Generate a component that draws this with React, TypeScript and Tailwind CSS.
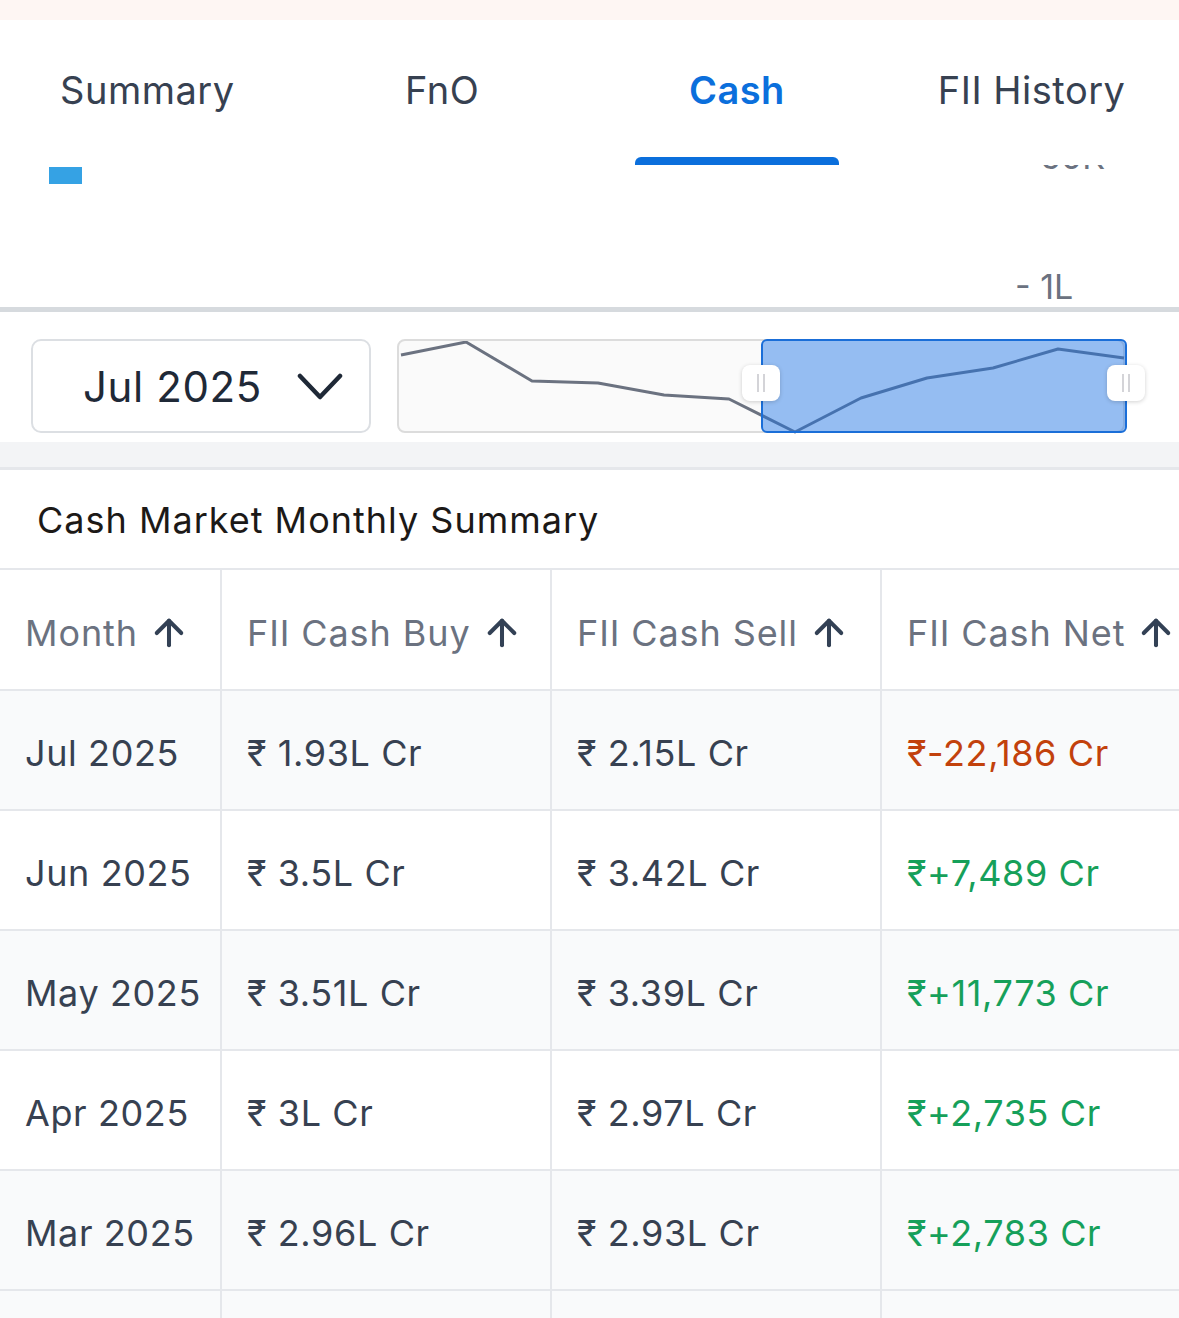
import React from 'react';
import { ArrowUp } from 'lucide-react';

type Row = { month: string; buy: string; sell: string; net: string; up: boolean };

const ROWS: Row[] = [
  { month: 'Jul 2025', buy: '₹ 1.93L Cr', sell: '₹ 2.15L Cr', net: '₹-22,186 Cr', up: false },
  { month: 'Jun 2025', buy: '₹ 3.5L Cr', sell: '₹ 3.42L Cr', net: '₹+7,489 Cr', up: true },
  { month: 'May 2025', buy: '₹ 3.51L Cr', sell: '₹ 3.39L Cr', net: '₹+11,773 Cr', up: true },
  { month: 'Apr 2025', buy: '₹ 3L Cr', sell: '₹ 2.97L Cr', net: '₹+2,735 Cr', up: true },
  { month: 'Mar 2025', buy: '₹ 2.96L Cr', sell: '₹ 2.93L Cr', net: '₹+2,783 Cr', up: true },
];

const TABS = ['Summary', 'FnO', 'Cash', 'FII History'];

// brush sparkline points, in brush-local pixels
const SPARK = '2,14 67,1 133,40 199,42 265,54 330,58 396,91 462,57 528,37 594,27 659,8 725,17';

const Handle: React.FC<{ left: string }> = ({ left }) => (
  <div
    className={`absolute ${left} top-[24px] w-[38px] h-[36px] rounded-[8px] bg-white shadow-[0_1px_4px_rgba(0,0,0,0.18)] flex items-center justify-center gap-[4px]`}
  >
    <span className="block w-[2px] h-[18px] bg-[#d4d4d8]" />
    <span className="block w-[2px] h-[18px] bg-[#d4d4d8]" />
  </div>
);

export default function App() {
  return (
    <div className="w-[1179px] h-[1318px] bg-white overflow-hidden font-[Inter,'Noto_Sans',sans-serif]">
      {/* top strip */}
      <div className="h-[20px] bg-[#fef6f3]" />

      {/* Tabs */}
      <div className="grid grid-cols-4 h-[145px] bg-white">
        {TABS.map((t) => {
          const active = t === 'Cash';
          return (
            <div key={t} className="flex flex-col items-center">
              <div
                className={`pt-[46px] text-[38px] leading-[48px] tracking-[0.5px] ${
                  active ? 'text-[#0b6fdc] font-semibold' : 'text-[#374151]'
                }`}
              >
                {t}
              </div>
              {active && <div className="mt-auto w-[204px] h-[8px] rounded-t-[6px] bg-[#0b6fdc]" />}
            </div>
          );
        })}
      </div>

      {/* Chart (scrolled under tabs) */}
      <div className="relative h-[142px] overflow-hidden bg-white">
        <div className="absolute left-[49px] top-[2px] w-[33px] h-[17px] bg-[#35a2e4]" />
        <div className="absolute left-[1015px] top-[-28px] text-[34px] leading-[40px] text-[#6b7280]">- 50K</div>
        <div className="absolute left-[1015px] top-[102px] text-[34px] leading-[40px] text-[#6b7280]">- 1L</div>
      </div>
      <div className="h-[5px] bg-[#d6dade]" />

      {/* Controls */}
      <div className="h-[130px] flex items-start pt-[27px] pl-[31px] bg-white">
        <div className="w-[340px] h-[94px] border-2 border-[#dcdfe3] rounded-[10px] flex items-center pl-[50px] pr-[26px] justify-between">
          <span className="text-[42px] text-[#1f2937] tracking-[0.6px]">Jul 2025</span>
          <svg width="46" height="30" viewBox="0 0 46 30" className="mt-[2px]">
            <polyline points="3,4 23,25 43,4" fill="none" stroke="#1f2937" strokeWidth="4.5" strokeLinecap="round" strokeLinejoin="round" />
          </svg>
        </div>
        <div className="relative ml-[26px] w-[728px] h-[94px] border-2 border-[#dcdcdc] rounded-[8px] bg-[#fafafa]">
          <svg className="absolute inset-0" width="728" height="94" viewBox="0 0 728 94">
            <polyline points={SPARK} fill="none" stroke="#6b7280" strokeWidth="3" strokeLinejoin="round" />
          </svg>
          <div className="absolute left-[362px] top-[-2px] w-[366px] h-[94px] rounded-[6px] border-2 border-[#1a6ed8] bg-[rgba(26,115,232,0.45)]" />
          <Handle left="left-[343px]" />
          <Handle left="left-[708px]" />
        </div>
      </div>

      <div className="h-[25px] bg-[#f3f4f6]" />
      <div className="h-[3px] bg-[#e5e7eb]" />

      {/* Summary title */}
      <div className="h-[100px] flex items-center pl-[37px] pt-[2px] border-b-2 border-[#e5e7eb]">
        <h3 className="text-[36px] text-[#1c1917] tracking-[1px]">Cash Market Monthly Summary</h3>
      </div>

      {/* Table */}
      <div className="overflow-hidden">
        <table className="w-[1212px] border-collapse table-fixed text-[36px] tracking-[0.6px]">
          <colgroup>
            <col className="w-[221px]" />
            <col className="w-[330px]" />
            <col className="w-[330px]" />
            <col className="w-[331px]" />
          </colgroup>
          <thead>
            <tr className="h-[120px] border-b-2 border-[#e5e7eb]">
              {['Month', 'FII Cash Buy', 'FII Cash Sell', 'FII Cash Net'].map((h, i) => (
                <th
                  key={h}
                  className={`text-left font-normal text-[#6b7280] tracking-[0.9px] px-[25px] pt-[6px] ${i > 0 ? 'border-l-2 border-[#e5e7eb]' : ''}`}
                >
                  <span className="inline-flex items-center gap-[10px] whitespace-nowrap">
                    {h}
                    <ArrowUp className="w-[42px] h-[42px] text-[#334155]" strokeWidth={2.3} />
                  </span>
                </th>
              ))}
            </tr>
          </thead>
          <tbody>
            {ROWS.map((r, i) => (
              <tr key={r.month} className={`h-[120px] border-b-2 border-[#e5e7eb] ${i % 2 === 0 ? 'bg-[#f9fafb]' : 'bg-white'}`}>
                <td className="px-[25px] pt-[6px] text-[#374151] whitespace-nowrap">{r.month}</td>
                <td className="px-[25px] pt-[6px] text-[#374151] whitespace-nowrap border-l-2 border-[#e5e7eb]">{r.buy}</td>
                <td className="px-[25px] pt-[6px] text-[#374151] whitespace-nowrap border-l-2 border-[#e5e7eb]">{r.sell}</td>
                <td
                  className={`px-[25px] pt-[6px] whitespace-nowrap border-l-2 border-[#e5e7eb] ${
                    r.up ? 'text-[#16a05a]' : 'text-[#c2410c]'
                  }`}
                >
                  {r.net}
                </td>
              </tr>
            ))}
            <tr className="h-[120px] bg-[#f9fafb]">
              <td />
              <td className="border-l-2 border-[#e5e7eb]" />
              <td className="border-l-2 border-[#e5e7eb]" />
              <td className="border-l-2 border-[#e5e7eb]" />
            </tr>
          </tbody>
        </table>
      </div>
    </div>
  );
}
